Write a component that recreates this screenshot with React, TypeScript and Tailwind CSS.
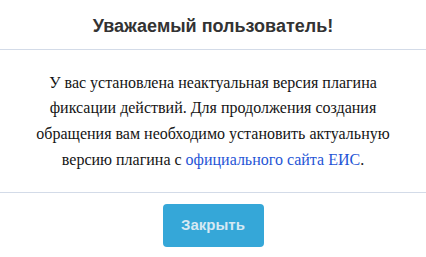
export default function App() {
  return (
    <div className="w-[426px] h-[257px] bg-white flex flex-col">
      <div className="h-[49px] flex items-center justify-center border-b border-[#d3dbe8] box-content">
        <h1 className="font-['Liberation_Sans'] text-[18px] font-bold text-[#333333] leading-none pt-[2px]">
          Уважаемый пользователь!
        </h1>
      </div>
      <div className="h-[142px] flex items-center justify-center px-6 border-b border-[#d3dbe8] box-content">
        <p className="font-['Liberation_Serif'] text-center text-[16px] leading-[25.6px] text-[#141414]">
          У вас установлена неактуальная версия плагина фиксации действий. Для продолжения создания обращения вам необходимо установить актуальную версию плагина с{'\u00a0'}<span className="text-[#1f55d6]">официального сайта ЕИС</span>.
        </p>
      </div>
      <div className="flex justify-center pt-[11px]">
        <button className="font-['Liberation_Sans'] w-[101px] h-[43px] rounded-[4px] bg-[#35a7d8] text-[#d6e9f3] text-[15px] font-bold flex items-center justify-center">
          Закрыть
        </button>
      </div>
    </div>
  );
}
